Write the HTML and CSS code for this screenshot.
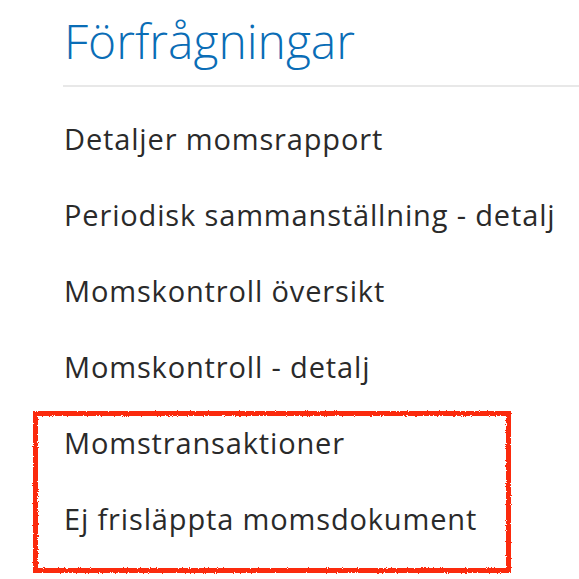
FILE: index.html
```html
<!DOCTYPE html>
<html lang="sv">
<head>
  <meta charset="UTF-8" />
  <meta name="viewport" content="width=device-width, initial-scale=1" />
  <title>Förfrågningar</title>
  <link rel="stylesheet" href="styles.css">
</head>
<body>
  <svg class="defs" width="0" height="0">
    <filter id="rough" x="-5%" y="-10%" width="110%" height="120%">
      <feTurbulence type="fractalNoise" baseFrequency="0.9" numOctaves="2" result="noise" />
      <feDisplacementMap in="SourceGraphic" in2="noise" scale="3" />
    </filter>
  </svg>

  <div class="panel">
    <h1 class="panel-title">Förfrågningar</h1>

    <ul class="menu">
      <li class="menu-item">Detaljer momsrapport</li>
      <li class="menu-item">Periodisk sammanställning - detalj</li>
      <li class="menu-item">Momskontroll översikt</li>
      <li class="menu-item">Momskontroll - detalj</li>
      <li class="highlight">
        <ul class="menu">
          <li class="menu-item">Momstransaktioner</li>
          <li class="menu-item">Ej frisläppta momsdokument</li>
        </ul>
      </li>
    </ul>
  </div>
</body>
</html>
```

FILE: styles.css
```css
body {
  margin: 0;
  padding: 0;
  font-family: 'Open Sans', 'Noto Sans', sans-serif;
  background: #fff;
  color: #2a2a2a;
  overflow-x: hidden;
}

.defs {
  position: absolute;
}

.panel {
  padding-top: 8px;
  padding-bottom: 30px;
}

.panel-title {
  margin: 0 0 0 63px;
  padding: 0 0 11px 1px;
  font-size: 48px;
  font-weight: 300;
  line-height: 66px;
  color: #0a6db6;
  border-bottom: 2px solid #e8e8e8;
}

.menu {
  list-style: none;
  margin: 0;
  padding: 0;
}

.panel > .menu {
  margin-top: 14px;
}

.menu-item {
  padding: 20px 0 20px 64px;
  font-size: 29px;
  line-height: 36px;
  letter-spacing: 0.85px;
  white-space: nowrap;
}

.highlight {
  position: relative;
}

.highlight::after {
  content: "";
  position: absolute;
  top: 6px;
  left: 33px;
  right: 68px;
  bottom: -16px;
  border: 5px solid #fb2a0a;
  filter: url(#rough);
  pointer-events: none;
}
```
